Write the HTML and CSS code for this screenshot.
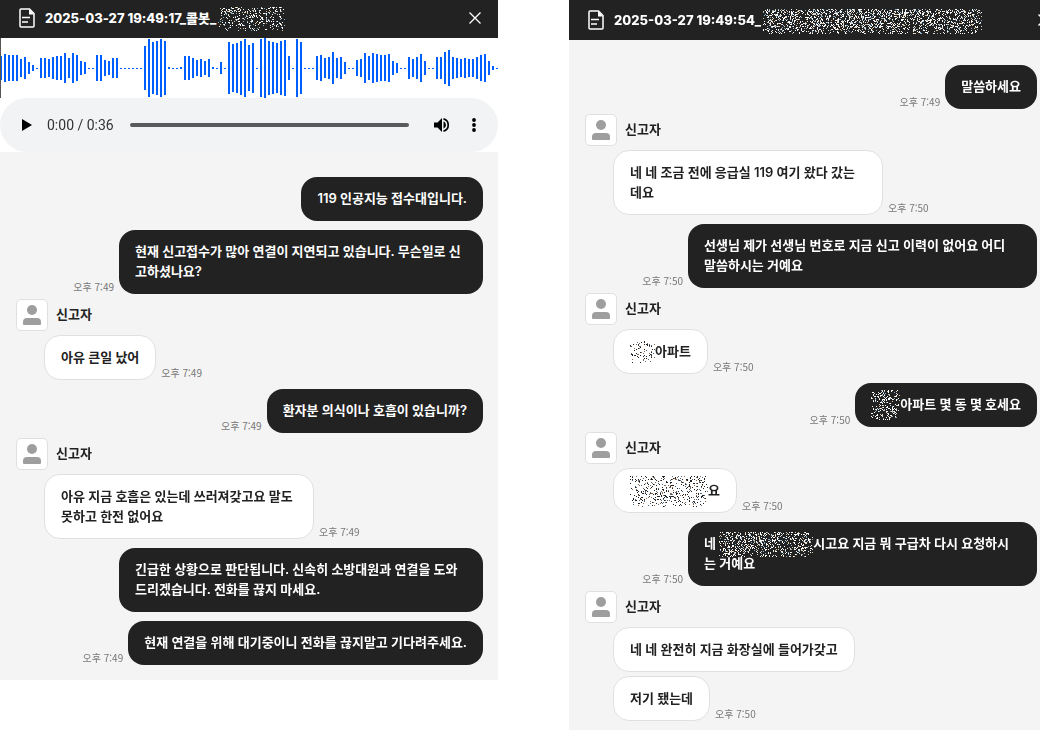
FILE: index.html
```html
<!DOCTYPE html>
<html lang="ko">
<head>
    <meta charset="UTF-8">
    <meta name="viewport" content="width=device-width, initial-scale=1.0">
    <title>신고 통화 기록</title>
    <link rel="stylesheet" href="styles.css">
</head>
<body>
    <!-- shared icons -->
    <svg class="defs" aria-hidden="true">
        <symbol id="icon-doc" viewBox="0 0 16 20">
            <path d="M2 1h8.500l4.500 4.500V18a1 1 0 0 1-1 1H2a1 1 0 0 1-1-1V2a1 1 0 0 1 1-1z" fill="none" stroke="currentColor" stroke-width="1.500"/>
            <path d="M10 1l5 5.500h-5z" fill="currentColor"/>
            <path d="M3 9.500h8M3 14h6" stroke="currentColor" stroke-width="1.500"/>
        </symbol>
        <symbol id="icon-close" viewBox="0 0 12 12">
            <path d="M.5.5l11 11M11.500.5l-11 11" stroke="currentColor" stroke-width="1.300"/>
        </symbol>
        <symbol id="icon-user" viewBox="0 0 18 20">
            <circle cx="9" cy="5" r="5"/>
            <path d="M4 13h10q4 0 4 4v2q0 1-1 1H1q-1 0-1-1v-2q0-4 4-4z"/>
        </symbol>
    </svg>

    <div class="app">
        <section class="panel">
            <header class="header">
                <svg class="doc"><use href="#icon-doc"/></svg>
                <h2>2025-03-27 19:49:17_콜봇_<canvas class="noise" width="67" height="24" data-density="0.22"></canvas></h2>
                <button class="close" aria-label="닫기"><svg><use href="#icon-close"/></svg></button>
            </header>
            <svg class="wave" id="wave" viewBox="0 0 498 60" aria-hidden="true"></svg>
            <div class="player">
                <button class="play" aria-label="재생">
                    <svg width="10" height="12" viewBox="0 0 10 12"><path d="M0 0l10 6-10 6z"/></svg>
                </button>
                <span class="clock">0:00 / 0:36</span>
                <input class="seek" type="range" min="0" max="36" value="0" aria-label="재생 위치">
                <button class="volume" aria-label="음량">
                    <svg width="16" height="14" viewBox="0 0 16 14">
                        <path d="M0 4.500h3.500L8 0v14L3.500 9.500H0zM9.500 3.300a4 4 0 0 1 0 7.400z"/>
                        <path d="M9.500.9a6.300 6.300 0 0 1 0 12.200" fill="none" stroke="#000" stroke-width="1.700"/>
                    </svg>
                </button>
                <button class="more" aria-label="더보기">
                    <svg width="4" height="14" viewBox="0 0 4 14"><circle cx="2" cy="2" r="1.900"/><circle cx="2" cy="7" r="1.900"/><circle cx="2" cy="12" r="1.900"/></svg>
                </button>
            </div>
            <div class="chat">
                <div class="row sent"><p class="bubble">119 인공지능 접수대입니다.</p></div>
                <div class="row sent">
                    <time>오후 7:49</time>
                    <p class="bubble long">현재 신고접수가 많아 연결이 지연되고 있습니다. 무슨일로 신<br>고하셨나요?</p>
                </div>
                <div class="caller"><span class="avatar"><svg><use href="#icon-user"/></svg></span><span>신고자</span></div>
                <div class="row received"><p class="bubble">아유 큰일 났어</p><time>오후 7:49</time></div>
                <div class="row sent"><time>오후 7:49</time><p class="bubble">환자분 의식이나 호흡이 있습니까?</p></div>
                <div class="caller"><span class="avatar"><svg><use href="#icon-user"/></svg></span><span>신고자</span></div>
                <div class="row received">
                    <p class="bubble long">아유 지금 호흡은 있는데 쓰러져갖고요 말도<br>못하고 한전 없어요</p>
                    <time>오후 7:49</time>
                </div>
                <div class="row sent"><p class="bubble long">긴급한 상황으로 판단됩니다. 신속히 소방대원과 연결을 도와<br>드리겠습니다. 전화를 끊지 마세요.</p></div>
                <div class="row sent"><time>오후 7:49</time><p class="bubble">현재 연결을 위해 대기중이니 전화를 끊지말고 기다려주세요.</p></div>
            </div>
        </section>

        <section class="panel panel-cut">
            <header class="header">
                <svg class="doc"><use href="#icon-doc"/></svg>
                <h2>2025-03-27 19:49:54_<canvas class="noise" width="219" height="25" data-density="0.34"></canvas></h2>
                <button class="close" aria-label="닫기"><svg><use href="#icon-close"/></svg></button>
            </header>
            <div class="chat">
                <div class="row sent"><time>오후 7:49</time><p class="bubble">말씀하세요</p></div>
                <div class="caller"><span class="avatar"><svg><use href="#icon-user"/></svg></span><span>신고자</span></div>
                <div class="row received">
                    <p class="bubble long">네 네 조금 전에 응급실 119 여기 왔다 갔는<br>데요</p>
                    <time>오후 7:50</time>
                </div>
                <div class="row sent">
                    <time>오후 7:50</time>
                    <p class="bubble long">선생님 제가 선생님 번호로 지금 신고 이력이 없어요 어디<br>말씀하시는 거예요</p>
                </div>
                <div class="caller"><span class="avatar"><svg><use href="#icon-user"/></svg></span><span>신고자</span></div>
                <div class="row received"><p class="bubble"><canvas class="noise" width="25" height="22" data-density="0.2"></canvas>아파트</p><time>오후 7:50</time></div>
                <div class="row sent"><time>오후 7:50</time><p class="bubble"><canvas class="noise" width="29" height="30" data-density="0.28"></canvas>아파트 몇 동 몇 호세요</p></div>
                <div class="caller"><span class="avatar"><svg><use href="#icon-user"/></svg></span><span>신고자</span></div>
                <div class="row received"><p class="bubble"><canvas class="noise" width="78" height="31" data-density="0.19"></canvas>요</p><time>오후 7:50</time></div>
                <div class="row sent">
                    <time>오후 7:50</time>
                    <p class="bubble long">네 <canvas class="noise" width="94" height="25" data-density="0.3"></canvas>시고요 지금 뭐 구급차 다시 요청하시<br>는 거예요</p>
                </div>
                <div class="caller"><span class="avatar"><svg><use href="#icon-user"/></svg></span><span>신고자</span></div>
                <div class="row received"><p class="bubble">네 네 완전히 지금 화장실에 들어가갖고</p></div>
                <div class="row received"><p class="bubble">저기 됐는데</p><time>오후 7:50</time></div>
            </div>
        </section>
    </div>

    <script src="script.js"></script>
</body>
</html>
```

FILE: styles.css
```css
* {
    box-sizing: border-box;
}

body {
    margin: 0;
    background: #fff;
    color: #222;
    font-family: Inter, "Noto Sans CJK KR", sans-serif;
    font-size: 13px;
    font-weight: 600;
    line-height: 20px;
    overflow: hidden;
}

h2, p {
    margin: 0;
    font-size: 13px;
}

h2 {
    font-weight: 800;
}

button {
    display: flex;
    align-items: center;
    justify-content: center;
    padding: 0;
    border: 0;
    background: none;
    color: inherit;
    cursor: pointer;
}

.defs {
    display: none;
}

.app {
    display: flex;
    align-items: flex-start;
    gap: 71px;
    height: 100vh;
}

.panel {
    flex: 498 1 0;
    min-width: 0;
    background: #f4f4f4;
}

.panel-cut {
    flex-grow: 471;
    height: 100%;
    overflow: hidden;
}

/* header */
.header {
    display: flex;
    align-items: center;
    height: 38px;
    padding: 0 17px 2px 19px;
    background: #222;
    color: #fff;
}

.panel-cut .header {
    height: 40px;
    padding-bottom: 0;
    padding-right: 0;
}

.header h2 {
    flex: 1;
    white-space: nowrap;
}

.doc {
    width: 16px;
    height: 20px;
    margin-right: 10px;
}

.close svg {
    width: 12px;
    height: 12px;
}

.panel-cut .close {
    margin-right: -10px;
}

.noise {
    display: inline-block;
    vertical-align: middle;
    margin: -8px 0;
}

h2 .noise {
    margin-left: 2px;
}

/* audio */
.wave {
    display: block;
    width: 100%;
    background: #fff;
    fill: #005fff;
}

.player {
    display: flex;
    align-items: center;
    height: 54px;
    padding: 0 22px;
    border-radius: 27px;
    background: #f1f3f4;
    box-shadow: 0 0 0 27px #fff;
    clip-path: inset(0);
}

.clock {
    margin: 0 16px 0 15px;
    color: #333;
    font: 14px/20px Roboto, sans-serif;
}

.seek {
    flex: 1;
    height: 4px;
    min-width: 0;
    margin: 0;
    border-radius: 2px;
    background: #5a5a5a;
    appearance: none;
}

.seek::-webkit-slider-thumb {
    width: 0;
    height: 0;
    appearance: none;
}

.volume {
    margin: 0 22px 0 25px;
}

/* chat */
.chat {
    padding: 25px 15px 15px 16px;
}

.panel-cut .chat {
    padding-right: 3px;
}

.row {
    display: flex;
    align-items: flex-end;
    gap: 5px;
    margin-top: 9px;
}

.row:first-child {
    margin-top: 0;
}

.row.sent {
    justify-content: flex-end;
}

.row.received {
    margin-top: 4px;
    padding-left: 28px;
}

.bubble {
    padding: 11px 16px 13px;
    border-radius: 16px;
    white-space: nowrap;
}

.sent .bubble {
    background: #222;
    color: #fff;
}

.received .bubble {
    padding-bottom: 12px;
    border: 1px solid #e0e0e0;
    background: #fff;
}

.sent .long {
    width: 364px;
}

.panel-cut .sent .long {
    width: 349px;
}

.received .long {
    width: 270px;
}

time {
    color: #777;
    font-family: "Noto Sans CJK KR", sans-serif;
    font-size: 10px;
    font-weight: 400;
    line-height: 14px;
    white-space: nowrap;
}

.caller {
    display: flex;
    align-items: center;
    gap: 8px;
    margin-top: 5px;
}

.caller span:last-child {
    padding-bottom: 3px;
}

.avatar {
    display: flex;
    align-items: center;
    justify-content: center;
    width: 32px;
    height: 32px;
    border: 1px solid #e0e0e0;
    border-radius: 5px;
    background: #fff;
}

.avatar svg {
    width: 18px;
    height: 20px;
    fill: #9e9e9e;
}
```

FILE: script.js
```js
const bars = [
    24, 28, 26, 26, 26, 18, 22, 12, 6, 1, 20, 20, 18, 22, 24, 24, 30, 20, 30, 26,
    14, 12, 1, 1, 26, 26, 16, 14, 20, 20, 1, 1, 1, 1, 1, 1, 44, 58, 52, 54,
    58, 54, 2, 1, 1, 2, 24, 24, 20, 16, 18, 14, 18, 2, 1, 12, 1, 52, 48, 50,
    54, 58, 46, 50, 1, 58, 60, 54, 52, 50, 54, 56, 24, 1, 58, 52, 1, 1, 1, 24,
    26, 20, 22, 32, 20, 22, 12, 1, 1, 16, 18, 30, 24, 30, 28, 26, 26, 28, 14, 10,
    1, 1, 22, 18, 22, 28, 14, 1, 1, 22, 22, 32, 36, 22, 20, 18, 20, 18, 18, 22,
    26, 28, 14, 4, 1
];

const wave = document.querySelector("#wave");
wave.innerHTML = bars.map((h, i) =>
    `<rect x="${i * 4}" y="${30 - Math.floor(h / 2)}" width="2" height="${h}"/>`
).join("") + '<rect x="0" y="0" width="1" height="60" fill="#555"/>';

// masks personal details with random dots
let seed = 119;
function random() {
    seed = (seed + 0x6D2B79F5) | 0;
    let t = Math.imul(seed ^ (seed >>> 15), 1 | seed);
    t = (t + Math.imul(t ^ (t >>> 7), 61 | t)) ^ t;
    return ((t ^ (t >>> 14)) >>> 0) / 4294967296;
}

document.querySelectorAll(".noise").forEach(canvas => {
    const ctx = canvas.getContext("2d");
    const dark = canvas.closest(".received");
    const colors = dark ? ["#222", "#222", "#222", "#8a6a50", "#567"] : ["#fff", "#fff", "#fff", "#ddd", "#d8c8a8", "#8ab0c8"];
    for (let y = 0; y < canvas.height; y++) {
        for (let x = 0; x < canvas.width; x++) {
            // thinner towards the left, right and bottom
            const side = Math.min(1, (Math.min(x, canvas.width - x) + 4) / 10);
            const bottom = Math.min(1, (canvas.height - y + 8) / 16);
            if (random() < canvas.dataset.density * side * bottom) {
                ctx.fillStyle = colors[Math.floor(random() * colors.length)];
                ctx.fillRect(x, y, 1, 1);
            }
        }
    }
});
```
